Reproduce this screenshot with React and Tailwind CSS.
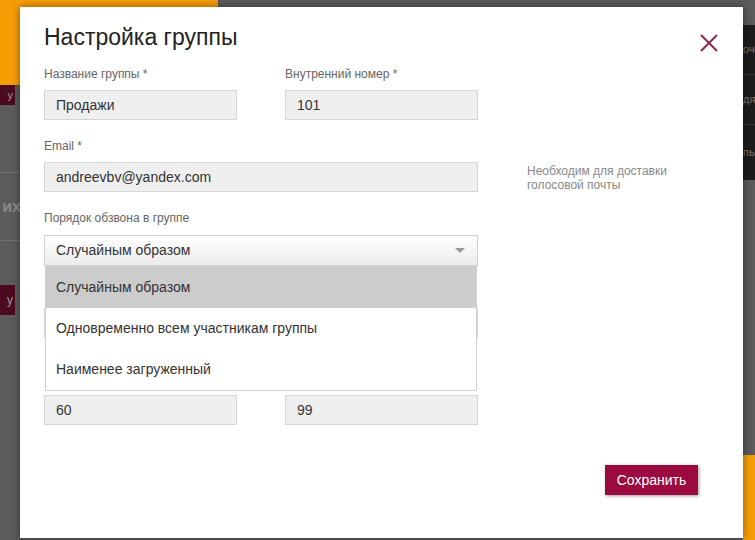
import { useState } from 'react';

const font = { fontFamily: '"Liberation Sans", Arial, sans-serif' };

function Field({ label, value, className = '' }) {
  return (
    <div className={className}>
      {label && <div className="text-[12px] leading-[16px] text-[#666]">{label}</div>}
      <div className={`${label ? 'mt-[8px]' : ''} h-[30px] bg-[#efefef] border border-[#d6d6d6] px-[11px] flex items-center text-[14px] text-[#333]`}>
        {value}
      </div>
    </div>
  );
}

const options = ['Случайным образом', 'Одновременно всем участникам группы', 'Наименее загруженный'];

export default function App() {
  const [order, setOrder] = useState(options[0]);

  return (
    <div className="relative w-[755px] h-[540px] overflow-hidden bg-[#5b5b5b]" style={font}>
      {/* page behind the dialog */}
      <div className="flex h-full">
        <div className="w-[218px] flex flex-col">
          <div className="h-[85px] bg-[#f59d06]" />
          <div className="h-[20px] w-[15px] bg-[#4b0a1f] text-[11px] text-[#999] flex items-center justify-end pr-[2px]">у</div>
          <div className="h-[67px]" />
          <div className="h-px bg-[#707070]" />
          <div className="h-[67px] flex items-center justify-end w-[21px] text-[16px] font-bold text-[#888]">их</div>
          <div className="h-px bg-[#707070]" />
          <div className="h-[44px]" />
          <div className="h-[30px] w-[15px] bg-[#4b0a1f] text-[12px] text-[#999] flex items-center justify-end pr-[2px]">у</div>
        </div>
        <div className="flex-1" />
        <div className="w-[12px] flex flex-col">
          <div className="h-[25px]" />
          <div className="bg-[#1c1c1c] text-[11px] text-[#777] overflow-hidden">
            <div className="h-[50px] flex items-center border-b border-[#333]">оч</div>
            <div className="h-[50px] flex items-center border-b border-[#333]">дя</div>
            <div className="h-[55px] flex items-center">пь</div>
          </div>
          <div className="flex-1" />
          <div className="h-[85px] bg-[#f59d06]" />
        </div>
      </div>

      {/* dialog */}
      <div className="absolute left-[20px] top-[7px] w-[723px] h-[531px] bg-white shadow-[0_0_8px_rgba(0,0,0,0.45)] pt-[14px] px-[24px]">
        <div className="flex items-start justify-between h-[32px]">
          <h2 className="text-[23px] leading-[32px] text-[#222]">Настройка группы</h2>
          <svg width="20" height="20" viewBox="0 0 20 20" className="mt-[12px]">
            <path d="M2 2 L18 18 M18 2 L2 18" stroke="#8a2a52" strokeWidth="2" fill="none" />
          </svg>
        </div>

        <div className="mt-[13px] flex gap-[48px]">
          <Field className="w-[193px]" label="Название группы *" value="Продажи" />
          <Field className="w-[193px]" label="Внутренний номер *" value="101" />
        </div>

        <div className="mt-[18px] flex gap-[49px]">
          <Field className="w-[434px]" label="Email *" value="andreevbv@yandex.com" />
          <div className="pt-[26px] text-[12px] leading-[14px] text-[#888] w-[160px]">
            Необходим для доставки голосовой почты
          </div>
        </div>

        <div className="mt-[18px] w-[434px] relative">
          <div className="text-[12px] leading-[16px] text-[#666]">Порядок обзвона в группе</div>
          <div className="mt-[9px] h-[31px] border border-[#d0d0d0] bg-gradient-to-b from-white to-[#ececec] px-[11px] flex items-center justify-between text-[14px] text-[#333]">
            <span>{order}</span>
            <svg width="10" height="6" viewBox="0 0 10 6" className="mr-[1px]">
              <path d="M0 0 L10 0 L5 5 Z" fill="#999" />
            </svg>
          </div>

          <div className="mt-[18px] text-[12px] leading-[16px] text-[#666]">&nbsp;</div>
          <div className="mt-[8px] h-[30px] bg-[#efefef] border border-[#d6d6d6]" />

          <div className="absolute left-[1px] top-[56px] w-[432px] bg-white border border-[#d0d0d0] border-t-0 z-10">
            {options.map((o, i) => (
              <div
                key={o}
                onClick={() => setOrder(o)}
                className={`px-[10px] flex items-center text-[14px] text-[#333] ${o === order ? 'bg-[#cccccc]' : ''} ${i === 1 ? 'h-[40px]' : 'h-[42px]'}`}
              >
                {o}
              </div>
            ))}
          </div>
        </div>

        <div className="mt-[57px] flex gap-[48px]">
          <Field className="w-[193px]" value="60" />
          <Field className="w-[193px]" value="99" />
        </div>

        <div className="mt-[40px] flex justify-end pr-[21px]">
          <button className="h-[30px] w-[93px] bg-[#9b0b3f] text-white text-[14px] shadow-[1px_1px_3px_rgba(0,0,0,0.4)]">
            Сохранить
          </button>
        </div>
      </div>
    </div>
  );
}
